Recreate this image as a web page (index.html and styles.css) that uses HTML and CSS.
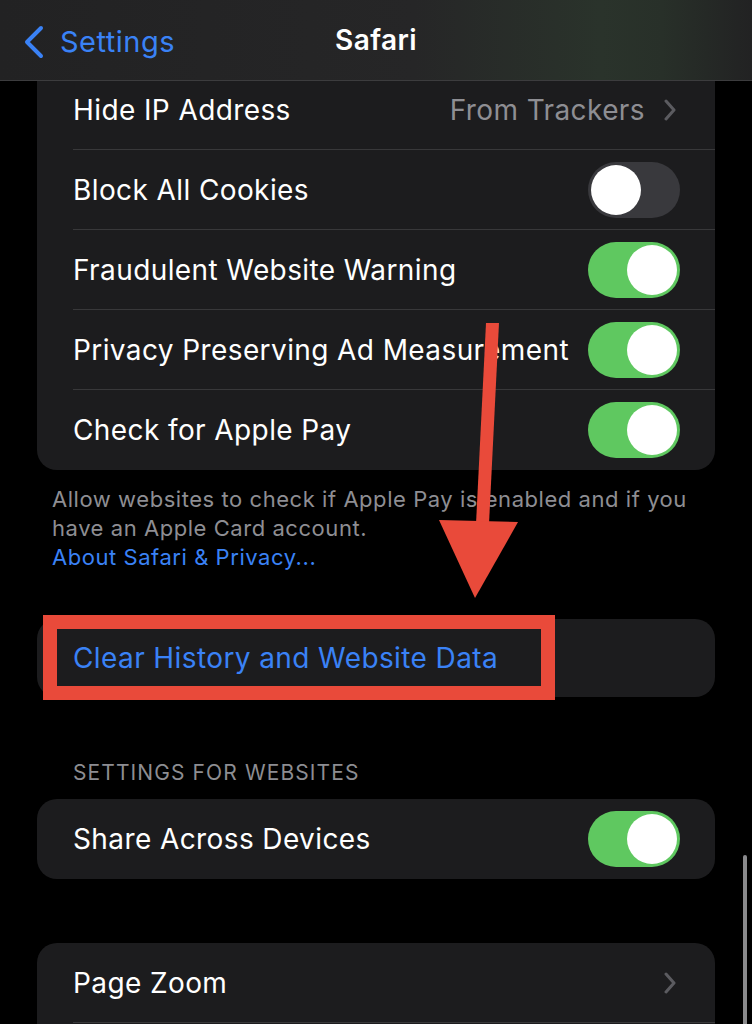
FILE: index.html
```html
<!DOCTYPE html>
<html>
<head lang="en">
    <meta charset="UTF-8">
    <title>Safari</title>
    <link rel="stylesheet" href="styles.css">
</head>
<body>
<div class="nav">
    <div class="nav_back">
        <svg class="back_icon" width="24" height="34" viewBox="0 0 24 34">
            <path d="M19 3 L5 17 L19 31" fill="none" stroke="#3a82f6" stroke-width="4" stroke-linecap="round" stroke-linejoin="round"/>
        </svg>
        <span>Settings</span>
    </div>
    <div class="nav_title">Safari</div>
</div>

<div class="page">
    <div class="card card_top">
        <div class="row">
            <span class="label">Hide IP Address</span>
            <span class="value">From Trackers</span>
            <svg class="chev" width="14" height="22" viewBox="0 0 14 22"><path d="M3 2 L11 11 L3 20" fill="none" stroke="#5b5b60" stroke-width="3" stroke-linecap="round" stroke-linejoin="round"/></svg>
        </div>
        <div class="row">
            <span class="label">Block All Cookies</span>
            <span class="toggle off"><span class="knob"></span></span>
        </div>
        <div class="row">
            <span class="label">Fraudulent Website Warning</span>
            <span class="toggle"><span class="knob"></span></span>
        </div>
        <div class="row">
            <span class="label">Privacy Preserving Ad Measurement</span>
            <span class="toggle"><span class="knob"></span></span>
        </div>
        <div class="row">
            <span class="label">Check for Apple Pay</span>
            <span class="toggle"><span class="knob"></span></span>
        </div>
    </div>
    <div class="footer">
        Allow websites to check if Apple Pay is enabled and if you have an Apple Card account.<br>
        <span class="link">About Safari &amp; Privacy...</span>
    </div>

    <div class="card card_clear">
        <div class="row">
            <span class="label blue">Clear History and Website Data</span>
        </div>
    </div>

    <div class="section_head">SETTINGS FOR WEBSITES</div>
    <div class="card">
        <div class="row">
            <span class="label">Share Across Devices</span>
            <span class="toggle"><span class="knob"></span></span>
        </div>
    </div>

    <div class="card card_zoom">
        <div class="row">
            <span class="label">Page Zoom</span>
            <svg class="chev" width="14" height="22" viewBox="0 0 14 22"><path d="M3 2 L11 11 L3 20" fill="none" stroke="#5b5b60" stroke-width="3" stroke-linecap="round" stroke-linejoin="round"/></svg>
        </div>
        <div class="row"></div>
    </div>
</div>

<div class="scrollbar"></div>

<!-- annotation drawn over the screenshot -->
<svg class="annot" width="752" height="1024" viewBox="0 0 752 1024">
    <polygon points="486,323 499,323 489,524 476,524" fill="#e94a3a"/>
    <polygon points="439,520 518,522 475,598" fill="#e94a3a"/>
    <rect x="50" y="622" width="498" height="71" fill="none" stroke="#e94a3a" stroke-width="14"/>
</svg>
</body>
</html>
```

FILE: styles.css
```css
* {
    margin: 0;
    padding: 0;
    box-sizing: border-box;
}
html, body {
    background: #000;
    width: 752px;
    height: 1024px;
    overflow: hidden;
}
body {
    font-family: Inter, "Noto Sans", sans-serif;
    color: #fff;
    position: relative;
}

.nav {
    position: absolute;
    top: 0;
    left: 0;
    width: 752px;
    height: 81px;
    background: linear-gradient(90deg, #222223 0%, #262627 55%, #2a332b 80%, #283029 88%, #222223 100%);
    border-bottom: 1px solid #3c3c3e;
    z-index: 2;
}
.nav_back {
    position: absolute;
    left: 22px;
    top: 24px;
    display: flex;
    align-items: center;
    gap: 14px;
    color: #3a82f6;
    font-size: 29px;
    letter-spacing: 0.5px;
}
.nav_title {
    text-align: center;
    line-height: 80px;
    font-size: 28px;
    font-weight: 600;
    letter-spacing: 0.4px;
}

.page {
    padding: 70px 37px 0 37px;
}
.card {
    background: #1c1c1e;
    border-radius: 20px;
    overflow: hidden;
}
.card_top {
    border-radius: 0 0 20px 20px;
}
.row {
    height: 80px;
    margin-left: 36px;
    padding-right: 36px;
    display: flex;
    align-items: center;
    border-bottom: 1px solid #38383a;
}
.card .row:last-child {
    border-bottom: none;
}
.label {
    flex: 1;
    font-size: 28px;
    letter-spacing: 0.4px;
    white-space: nowrap;
}
.blue {
    color: #3a82f6;
}
.value {
    color: #8e8e93;
    font-size: 28px;
    letter-spacing: 0.4px;
    margin-right: 18px;
}
.chev {
    margin-right: 2px;
}

.toggle {
    width: 92px;
    height: 56px;
    border-radius: 28px;
    background: #5fc860;
    position: relative;
    margin-right: -1px;
    flex-shrink: 0;
}
.toggle .knob {
    position: absolute;
    top: 3px;
    right: 3px;
    width: 50px;
    height: 50px;
    border-radius: 50%;
    background: #fff;
}
.toggle.off {
    background: #39393d;
}
.toggle.off .knob {
    right: auto;
    left: 3px;
}

.footer {
    padding: 15px 20px 0 15px;
    font-size: 22px;
    line-height: 29px;
    color: #8e8e93;
    letter-spacing: 0.55px;
    height: 149px;
}
.link {
    color: #3a82f6;
}
.card_clear .row {
    height: 78px;
}

.section_head {
    padding: 63px 36px 13px 36px;
    font-size: 21px;
    color: #8d8d92;
    line-height: 26px;
    letter-spacing: 1.1px;
}
.card_zoom {
    margin-top: 64px;
}

.scrollbar {
    position: absolute;
    left: 743px;
    top: 855px;
    width: 4px;
    height: 180px;
    border-radius: 2px;
    background: #8a8a8c;
}
.annot {
    position: absolute;
    top: 0;
    left: 0;
    z-index: 3;
}
```
